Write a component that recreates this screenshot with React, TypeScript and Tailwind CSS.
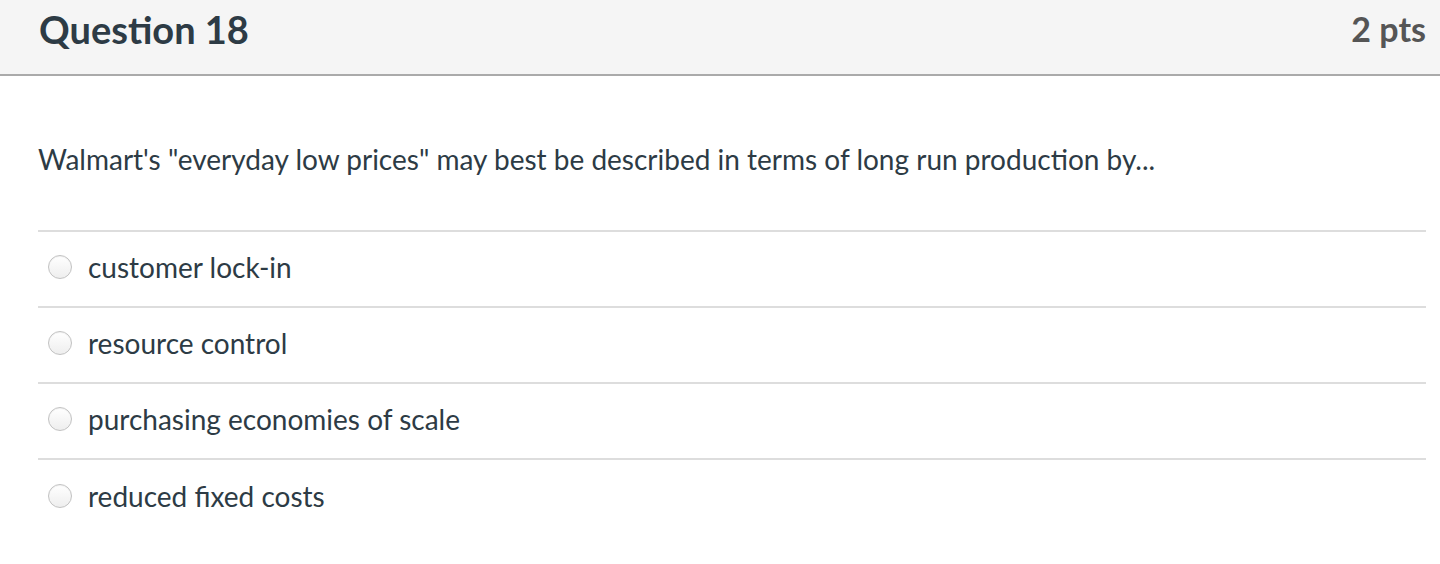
const OPTIONS = [
  "customer lock-in",
  "resource control",
  "purchasing economies of scale",
  "reduced fixed costs",
];

function Radio() {
  return (
    <span className="inline-block h-[24px] w-[24px] shrink-0 rounded-full border border-[#c2c2c2] bg-gradient-to-b from-white to-[#eeeeee] shadow-[inset_0_1px_1px_rgba(0,0,0,0.06)]" />
  );
}

export default function App() {
  return (
    <div className="min-h-[564px] w-[1440px] bg-white font-['Lato','Open_Sans',sans-serif] text-[#2d3b45]">
      {/* Header */}
      <div className="flex h-[76px] items-center justify-between border-b-2 border-[#aaaaaa] bg-[#f5f5f5] pb-[16px] pl-[39px] pr-[14px]">
        <h2 className="text-[38px] font-bold leading-none">Question 18</h2>
        <span className="text-[34px] font-bold leading-none text-[#555555]">2 pts</span>
      </div>

      {/* Body */}
      <div className="px-[38px] pr-[14px]">
        <p className="pt-[65px] pb-[53px] text-[28px] leading-[36px]">
          Walmart's "everyday low prices" may best be described in terms of long run production by...
        </p>
        <div className="border-t-2 border-[#dddddd]">
          {OPTIONS.map((opt, i) => (
            <div
              key={opt}
              className={
                "flex h-[76px] items-center gap-[16px] pb-[4px] pl-[10px] " +
                (i < OPTIONS.length - 1 ? "border-b-2 border-[#dddddd]" : "")
              }
            >
              <Radio />
              <span className="text-[28px]">{opt}</span>
            </div>
          ))}
        </div>
      </div>
    </div>
  );
}
